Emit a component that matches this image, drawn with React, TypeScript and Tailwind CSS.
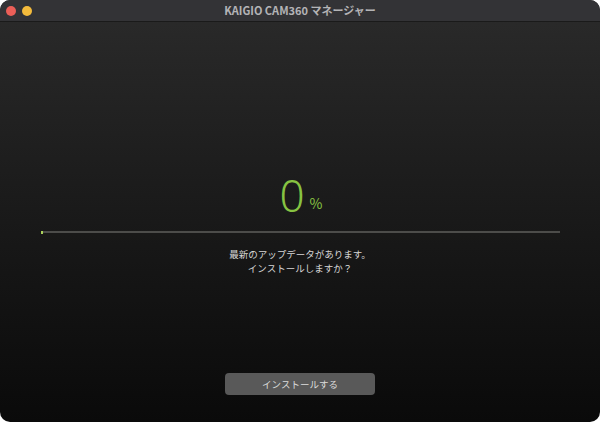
const jp = { fontFamily: '"Noto Sans CJK JP", "Noto Sans", sans-serif' };

export default function App() {
  return (
    <div className="h-[422px] w-[600px] bg-white">
      <div className="flex h-full flex-col overflow-hidden rounded-[10px] bg-gradient-to-b from-[#2b2b2b] to-[#0a0a0a]" style={jp}>
        <div className="relative flex h-[22px] shrink-0 items-center justify-center border-b border-[#1a1a1a] bg-[#333336]">
          <div className="absolute left-[6px] top-[6px] flex gap-[6px]">
            <span className="h-[10px] w-[10px] rounded-full bg-[#ec5f58]" />
            <span className="h-[10px] w-[10px] rounded-full bg-[#f4bb3c]" />
          </div>
          <span className="text-[11px] font-bold leading-none text-[#b4b4b6]">
            KAIGIO CAM360 マネージャー
          </span>
        </div>

        <div className="flex flex-1 flex-col items-center">
          <div className="mt-[151px] flex items-baseline pl-[2px] text-[#87c342]">
            <span className="text-[44px] font-light leading-[44px]" style={{ fontFamily: '"Noto Sans", sans-serif' }}>0</span>
            <span className="relative -top-[3px] ml-[5px] text-[14px] leading-none">%</span>
          </div>

          <div className="mt-[14px] flex h-[2px] w-[519px] items-center bg-[#4c4c4a]">
            <span className="h-[3px] w-[2px] bg-[#a9d05a]" />
          </div>

          <div className="mt-[14px] text-center text-[9.5px] leading-[14px] text-[#d6d6d6]">
            <p>最新のアップデータがあります。</p>
            <p>インストールしますか？</p>
          </div>

          <button className="mt-[98px] flex h-[22px] w-[150px] items-center justify-center rounded-[4px] bg-[#595959] text-[9.5px] text-[#dcdcdc]">
            インストールする
          </button>
        </div>
      </div>
    </div>
  );
}
